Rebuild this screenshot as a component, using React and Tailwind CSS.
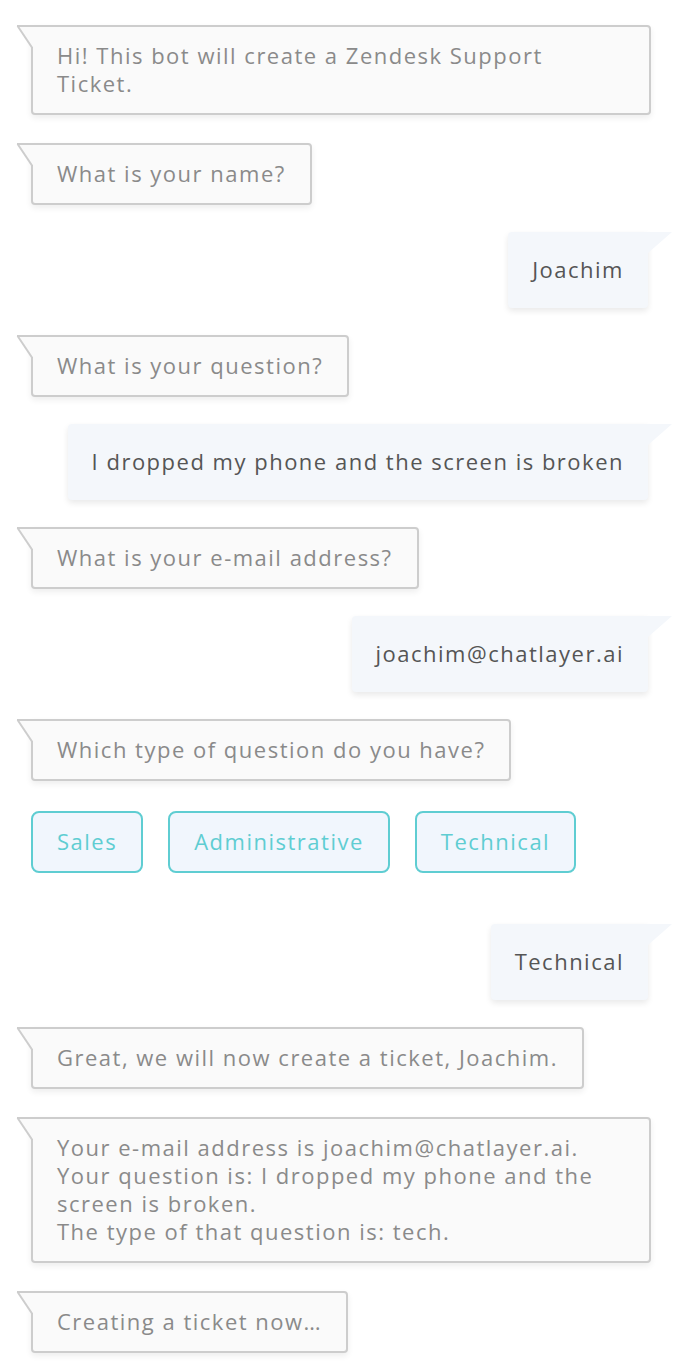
import React from "react";

function BotTail() {
  return (
    <svg
      className="absolute left-[-14px] top-0 overflow-visible"
      width="17"
      height="24"
      viewBox="0 0 17 24"
    >
      <polygon points="1,2 17,2 17,22 15,22" fill="#fafafa" />
      <line x1="0" y1="1" x2="17" y2="1" stroke="#cdcdcd" strokeWidth="2" />
      <line x1="0.6" y1="1" x2="15" y2="22.5" stroke="#cdcdcd" strokeWidth="2" />
    </svg>
  );
}

function UserTail() {
  return (
    <svg className="absolute right-[-24px] top-0" width="24" height="21" viewBox="0 0 24 21">
      <polygon points="0,0 24,0 0,21" fill="#f4f7fb" />
    </svg>
  );
}

function Bot({ children, className = "" }) {
  return (
    <div className={"relative ml-[31px] w-fit max-w-[620px] " + className}>
      <div className="rounded-[4px] rounded-tl-none border-2 border-[#cdcdcd] bg-[#fafafa] px-[24px] pt-[14px] pb-[16px] text-[#8a8a8a] shadow-[0_3px_6px_rgba(0,0,0,0.07)]">
        {children}
      </div>
      <BotTail />
    </div>
  );
}

function User({ children, className = "" }) {
  return (
    <div className={"relative mr-[28px] self-end " + className}>
      <div className="rounded-[4px] rounded-tr-none bg-[#f4f7fb] px-[24px] pt-[23px] pb-[25px] text-[#555555] shadow-[0_3px_6px_rgba(0,0,0,0.09)]">
        {children}
      </div>
      <UserTail />
    </div>
  );
}

function Choice({ children }) {
  return (
    <div className="rounded-[8px] border-2 border-[#5fcdd2] bg-[#f1f6fd] px-[24px] pt-[14px] pb-[16px] text-[#5fcdd2]">
      {children}
    </div>
  );
}

export default function App() {
  return (
    <div className="flex min-h-[1370px] w-[676px] flex-col gap-[27px] bg-white pt-[25px] font-['Open_Sans',sans-serif] text-[22px] leading-[28px] tracking-[1.5px]">
      <Bot>Hi! This bot will create a Zendesk Support Ticket.</Bot>
      <Bot className="mt-[1px]">What is your name?</Bot>
      <User>Joachim</User>
      <Bot>What is your question?</Bot>
      <User>I dropped my phone and the screen is broken</User>
      <Bot>What is your e-mail address?</Bot>
      <User>joachim@chatlayer.ai</User>
      <Bot>Which type of question do you have?</Bot>
      <div className="ml-[31px] mt-[3px] flex gap-[25px]">
        <Choice>Sales</Choice>
        <Choice>Administrative</Choice>
        <Choice>Technical</Choice>
      </div>
      <User className="mt-[24px]">Technical</User>
      <Bot>Great, we will now create a ticket, Joachim.</Bot>
      <Bot className="mt-[1px]">
        Your e-mail address is joachim@chatlayer.ai.
        <br />
        Your question is: I dropped my phone and the screen is broken.
        <br />
        The type of that question is: tech.
      </Bot>
      <Bot className="mt-[1px]">Creating a ticket now…</Bot>
    </div>
  );
}
